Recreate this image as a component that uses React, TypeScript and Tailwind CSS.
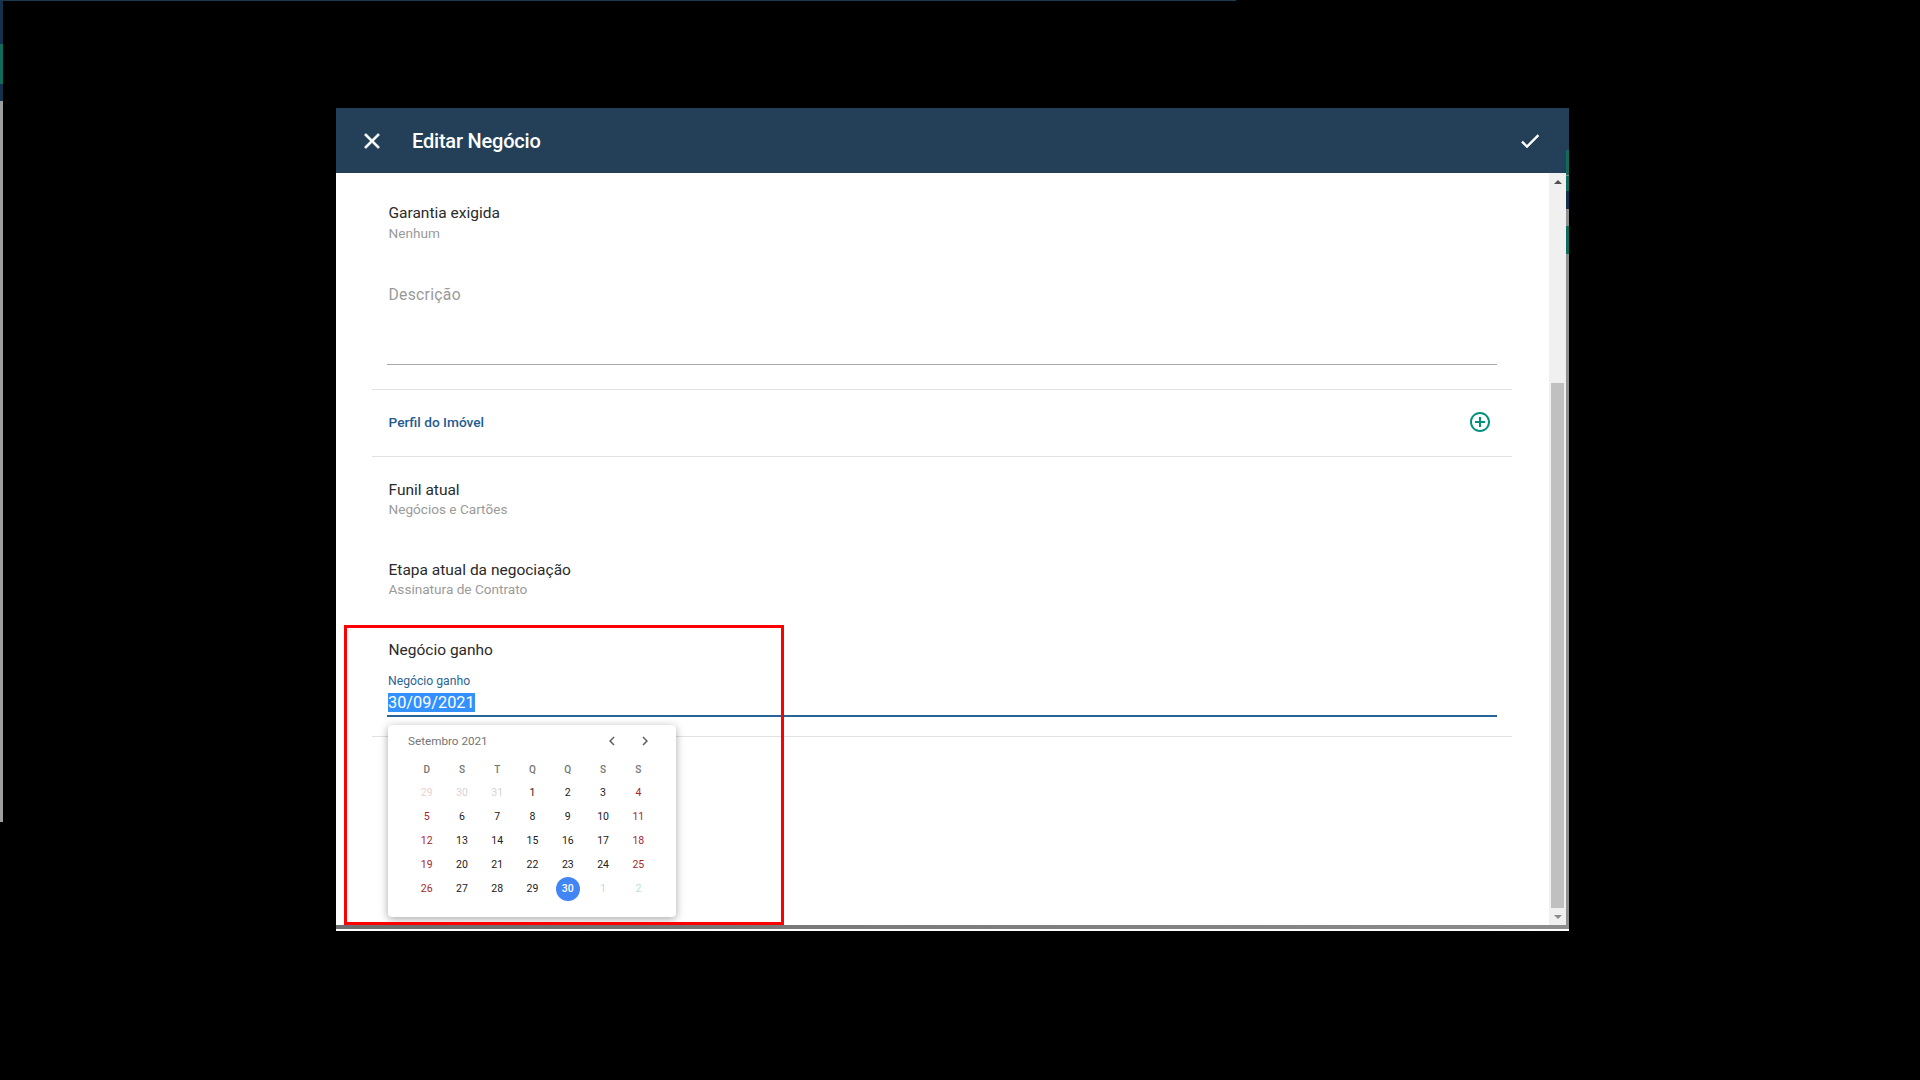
const font = { fontFamily: "Roboto, sans-serif" };

type Day = { n: number; kind: "muted" | "mutedRed" | "normal" | "red" | "next" | "selected" };

const buildDays = (): Day[] => {
  const days: Day[] = [
    { n: 29, kind: "mutedRed" },
    { n: 30, kind: "muted" },
    { n: 31, kind: "muted" },
  ];
  for (let n = 1; n <= 30; n++) {
    const col = (n + 2) % 7;
    days.push({ n, kind: n === 30 ? "selected" : col === 0 || col === 6 ? "red" : "normal" });
  }
  days.push({ n: 1, kind: "next" }, { n: 2, kind: "next" });
  return days;
};

const dayClass: Record<Day["kind"], string> = {
  muted: "text-[#d4d4d4]",
  mutedRed: "text-[#efcfcf]",
  normal: "text-[#212121]",
  red: "text-[#a9262c]",
  next: "text-[#b6e3dc]",
  selected: "text-white font-medium bg-[#4285f4] rounded-full",
};

const Info = ({ title, value, className, tight }: { title: string; value: string; className: string; tight?: boolean }) => (
  <div className={`pl-[16.5px] pr-4 ${className}`}>
    <div className="text-[15.5px] leading-5 text-[#2a2a2a]">{title}</div>
    <div className={`text-[13.6px] leading-5 text-[#9a9a9a] ${tight ? "-mt-px" : ""}`}>{value}</div>
  </div>
);

const Calendar = () => (
  <div className="absolute left-0 top-[9px] z-10 h-[192px] w-[288px] rounded-sm bg-white pl-5 shadow-[0_2px_8px_rgba(0,0,0,0.35)]">
    <div className="flex h-8 items-center">
      <span className="mt-px text-[11.7px] text-[#757575]">Setembro 2021</span>
      <div className="ml-[115px] flex gap-[15px] text-[#616161]">
        <svg width="18" height="18" viewBox="0 0 24 24" fill="currentColor">
          <path d="M15.41 7.41L14 6l-6 6 6 6 1.41-1.41L10.83 12z" />
        </svg>
        <svg width="18" height="18" viewBox="0 0 24 24" fill="currentColor">
          <path d="M10 6L8.59 7.41 13.17 12l-4.58 4.59L10 18l6-6z" />
        </svg>
      </div>
    </div>
    <div className="ml-px grid w-[247px] grid-cols-7">
      {["D", "S", "T", "Q", "Q", "S", "S"].map((d, i) => (
        <div key={i} className="flex h-6 items-center justify-center text-[10px] font-medium text-[#757575]">
          {d}
        </div>
      ))}
      {buildDays().map((d, i) => (
        <div key={i} className="flex h-6 items-center justify-center">
          <span className={`flex h-6 w-6 items-center justify-center text-[10.5px] ${dayClass[d.kind]}`}>{d.n}</span>
        </div>
      ))}
    </div>
  </div>
);

const Scrollbar = () => (
  <div className="flex w-[17px] flex-col bg-[#f0f0f0]">
    <div className="flex h-[17px] items-center justify-center">
      <div className="h-0 w-0 border-x-[4px] border-b-[4px] border-x-transparent border-b-[#505050]" />
    </div>
    <div className="mx-[2px] mt-[193px] h-[525px] bg-[#c0c0c0]" />
    <div className="flex h-[17px] items-center justify-center">
      <div className="h-0 w-0 border-x-[4px] border-t-[4px] border-x-transparent border-t-[#8a8a8a]" />
    </div>
  </div>
);

export default function App() {
  return (
    <div className="relative h-[1080px] w-[1920px] overflow-hidden bg-black" style={font}>
      <div className="h-px w-[1236px] bg-[#1b3a4f]" />
      <div className="flex">
        <div className="flex h-[821px] w-[3px] flex-col">
          <div className="h-[43px] bg-[#14304a]" />
          <div className="h-10 bg-[#0f6b5c]" />
          <div className="h-[17px] bg-[#14304a]" />
          <div className="flex-1 bg-[#9e9e9e]" />
        </div>
        <div className="ml-[333px] mt-[107px] flex h-[823px] w-[1230px] flex-col">
          <div className="flex h-[65px] items-center bg-[#234058] text-white">
            <svg className="ml-[23px]" width="26" height="26" viewBox="0 0 24 24" fill="currentColor" stroke="currentColor" strokeWidth="0.5">
              <path d="M19 6.41L17.59 5 12 10.59 6.41 5 5 6.41 10.59 12 5 17.59 6.41 19 12 13.41 17.59 19 19 17.59 13.41 12z" />
            </svg>
            <span className="ml-[27px] text-[20px] font-medium tracking-[-0.2px]">Editar Negócio</span>
            <svg className="ml-auto mr-6" width="24" height="24" viewBox="0 0 24 24" fill="currentColor" stroke="currentColor" strokeWidth="0.5">
              <path d="M9 16.17L4.83 12l-1.41 1.41L9 19 21 7l-1.41-1.41z" />
            </svg>
          </div>
          <div className="flex h-[752px] bg-white">
            <div className="flex-1 pl-9 pr-[37px]">
              <Info title="Garantia exigida" value="Nenhum" className="pt-[30px]" />
              <div className="mx-[15px] mt-10 h-[82px] border-b border-[#a8a8a8] text-[15.7px] leading-6 tracking-[0.3px] text-[#9a9a9a]">
                <div className="pl-[1.5px]">Descrição</div>
              </div>
              <div className="mt-6 flex h-[68px] items-center border-y border-[#e2e2e2] pb-[2px] pl-[16.5px] pr-[20px]">
                <span className="text-[13.7px] font-medium text-[#1f5c8f]">Perfil do Imóvel</span>
                <svg className="ml-auto text-[#00917c]" width="24" height="24" viewBox="0 0 24 24" fill="currentColor">
                  <path d="M13 7h-2v4H7v2h4v4h2v-4h4v-2h-4V7zm-1-5C6.48 2 2 6.48 2 12s4.48 10 10 10 10-4.48 10-10S17.52 2 12 2zm0 18c-4.41 0-8-3.59-8-8s3.59-8 8-8 8 3.59 8 8-3.59 8-8 8z" />
                </svg>
              </div>
              <Info title="Funil atual" value="Negócios e Cartões" className="pt-[23px]" tight />
              <Info title="Etapa atual da negociação" value="Assinatura de Contrato" className="pt-[41px]" tight />
              <div className="pl-[16.5px] pr-4 pt-[41px] text-[15.5px] leading-5 text-[#2a2a2a]">Negócio ganho</div>
              <div className="mx-[15px] mt-[11px] border-b-2 border-[#2a6496] pl-px">
                <div className="text-[12.2px] leading-5 text-[#2a6496]">Negócio ganho</div>
                <div className="h-6">
                  <span className="inline-block bg-[#3390ff] text-[16.3px] leading-[19px] text-white">30/09/2021</span>
                </div>
              </div>
              <div className="relative mt-[19px] border-t border-[#e2e2e2]">
                <div className="absolute left-4 top-[-21px]">
                  <div className="relative">
                    <Calendar />
                  </div>
                </div>
              </div>
            </div>
            <Scrollbar />
          </div>
          <div className="h-1 bg-gradient-to-r from-[#6e6e6e] to-[#8c8c8c]" />
          <div className="h-[2px] bg-white" />
        </div>
        <div className="mt-[107px] flex h-[823px] w-[3px] flex-col">
          <div className="h-[42px] bg-[#234058]" />
          <div className="h-[25px] bg-[#0f6b5c]" />
          <div className="h-px bg-[#8f8f8f]" />
          <div className="h-[15px] bg-[#0f6b5c]" />
          <div className="h-[18px] bg-[#14304a]" />
          <div className="h-[17px] bg-[#8f8f8f]" />
          <div className="h-7 bg-[#0f6b5c]" />
          <div className="flex-1 bg-[#8f8f8f]" />
          <div className="h-[2px] bg-white" />
        </div>
      </div>
      <div className="absolute left-[344px] top-[625px] z-20 h-[300px] w-[440px] border-[3px] border-[#ff0000]" />
    </div>
  );
}
